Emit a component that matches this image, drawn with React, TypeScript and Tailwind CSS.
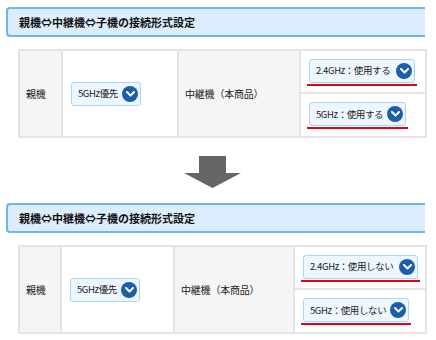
import React from 'react';

interface SelectBoxProps {
  readonly label: string;
  readonly width: string;
  readonly marked?: boolean;
}

function SelectBox({ label, width, marked }: SelectBoxProps) {
  return (
    <div className={`inline-flex flex-col align-middle ${width}`}>
      <div className="flex items-center justify-between h-[24px] pl-[6px] pr-[2px] bg-[#eef7ff] border border-[#a9d5f7] rounded-[3px] text-[9.5px] tracking-[-0.4px] whitespace-nowrap text-[#222]">
        <span>{label}</span>
        <span className="flex items-center justify-center w-[16px] h-[16px] rounded-full bg-[#1d5fa6]">
          <svg width="9" height="6" viewBox="0 0 9 6">
            <path d="M1 1 L4.5 4.5 L8 1" fill="none" stroke="#fff" strokeWidth="2" strokeLinecap="round" strokeLinejoin="round" />
          </svg>
        </span>
      </div>
      {marked && <div className="h-[2px] bg-[#e60012] -mx-[2px] mt-[1px]" />}
    </div>
  );
}

interface SettingTableProps {
  readonly cols: string[];
  readonly wifi24: string;
  readonly wifi5: string;
  readonly w24: string;
  readonly w5: string;
}

function SettingTable({ cols, wifi24, wifi5, w24, w5 }: SettingTableProps) {
  return (
    <table className="ml-[12px] w-[407px] table-fixed border-collapse text-[10px] tracking-[-0.2px] text-[#222]">
      <colgroup>
        {cols.map((w, i) => (
          <col key={i} className={w} />
        ))}
      </colgroup>
      <tbody>
        <tr className="h-[43px]">
          <td rowSpan={2} className="border-2 border-[#e4e4e4] bg-[#f5f5f5] pl-[6px] whitespace-nowrap">親機</td>
          <td rowSpan={2} className="border-2 border-[#e4e4e4] bg-white pl-[8px]">
            <SelectBox label="5GHz優先" width="w-[70px]" />
          </td>
          <td rowSpan={2} className="border-2 border-[#e4e4e4] bg-[#f5f5f5] pl-[6px] whitespace-nowrap">中継機（本商品）</td>
          <td className="border-2 border-[#e4e4e4] bg-white pl-[8px] pt-[1px]">
            <SelectBox label={wifi24} width={w24} marked />
          </td>
        </tr>
        <tr className="h-[44px]">
          <td className="border-2 border-[#e4e4e4] bg-white pl-[8px] pt-[1px]">
            <SelectBox label={wifi5} width={w5} marked />
          </td>
        </tr>
      </tbody>
    </table>
  );
}

function Heading() {
  return (
    <div className="flex items-center h-[30px] pl-[11px] bg-[#dcedfd] border-2 border-r-0 border-[#6cb6f2] rounded-l-[4px] text-[11px] font-bold whitespace-nowrap text-[#111]">
      親機⇔中継機⇔子機の接続形式設定
    </div>
  );
}

export default function App() {
  return (
    <div className="w-[436px] h-[340px] bg-white overflow-hidden font-['Noto_Sans_CJK_JP','Noto_Sans',sans-serif]">
      <div className="w-[419px] ml-[6px] pt-[7px] flex flex-col">
        <Heading />
        <div className="mt-[12px]">
          <SettingTable
            cols={['w-[43px]', 'w-[116px]', 'w-[122px]', 'w-[126px]']}
            wifi24="2.4GHz：使用する"
            wifi5="5GHz：使用する"
            w24="w-[106px]"
            w5="w-[97px]"
          />
        </div>
        <div className="flex justify-center mt-[18px]">
          <svg width="57" height="32" viewBox="0 0 57 32" className="ml-[-6px]">
            <path d="M15 0 H42 V17 H57 L28.5 32 L0 17 H15 Z" fill="#666" />
          </svg>
        </div>
        <div className="mt-[15px]">
          <Heading />
        </div>
        <div className="mt-[12px]">
          <SettingTable
            cols={['w-[42px]', 'w-[113px]', 'w-[120px]', 'w-[132px]']}
            wifi24="2.4GHz：使用しない"
            wifi5="5GHz：使用しない"
            w24="w-[115px]"
            w5="w-[106px]"
          />
        </div>
      </div>
    </div>
  );
}
